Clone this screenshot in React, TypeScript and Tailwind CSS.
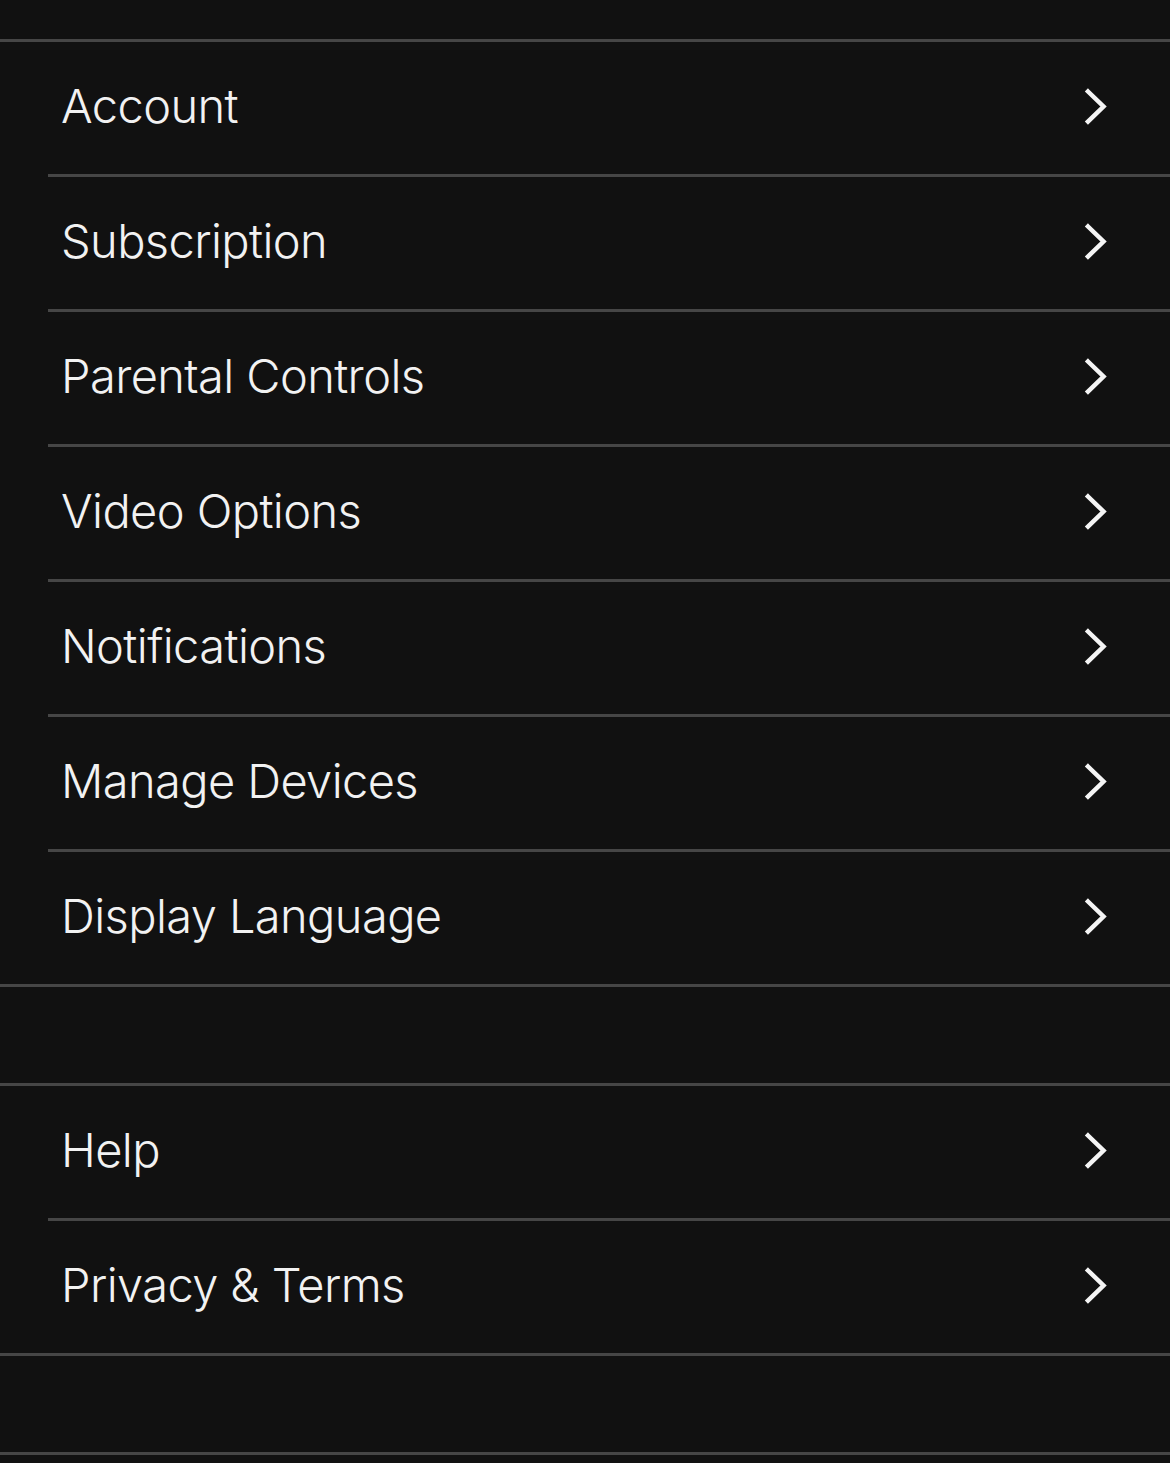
import React from "react";

const group1 = [
  "Account",
  "Subscription",
  "Parental Controls",
  "Video Options",
  "Notifications",
  "Manage Devices",
  "Display Language",
];
const group2 = ["Help", "Privacy & Terms"];

function Chevron() {
  return (
    <svg width="24" height="37" viewBox="0 0 24 37" fill="none" className="mb-[3px] shrink-0">
      <polyline
        points="4,3.5 19.5,18.5 4,33.5"
        stroke="#f5f5f5"
        strokeWidth="4.5"
        strokeLinecap="square"
        strokeLinejoin="miter"
        fill="none"
      />
    </svg>
  );
}

function Group({ items }: { items: string[] }) {
  return (
    <div className="border-y-[3px] border-[#464646]">
      {items.map((label, i) => (
        <div
          key={label}
          className={
            i < items.length - 1
              ? "ml-12 border-b-[3px] border-[#464646]"
              : "ml-12"
          }
        >
          <div className="flex h-[132px] items-center justify-between pl-[13px] pr-[62px]">
            <span
              className="mb-[6px] text-[47px] font-[350] leading-none tracking-[-0.6px] text-[#f2f2f2]"
              style={{ fontFamily: "Inter, 'Noto Sans', sans-serif" }}
            >
              {label}
            </span>
            <Chevron />
          </div>
        </div>
      ))}
    </div>
  );
}

export default function App() {
  return (
    <div className="min-h-[1463px] w-full bg-[#111111] pt-[39px]">
      <Group items={group1} />
      <div className="h-[96px]" />
      <Group items={group2} />
      <div className="h-[96px]" />
      <div className="border-t-[3px] border-[#464646]" />
    </div>
  );
}
